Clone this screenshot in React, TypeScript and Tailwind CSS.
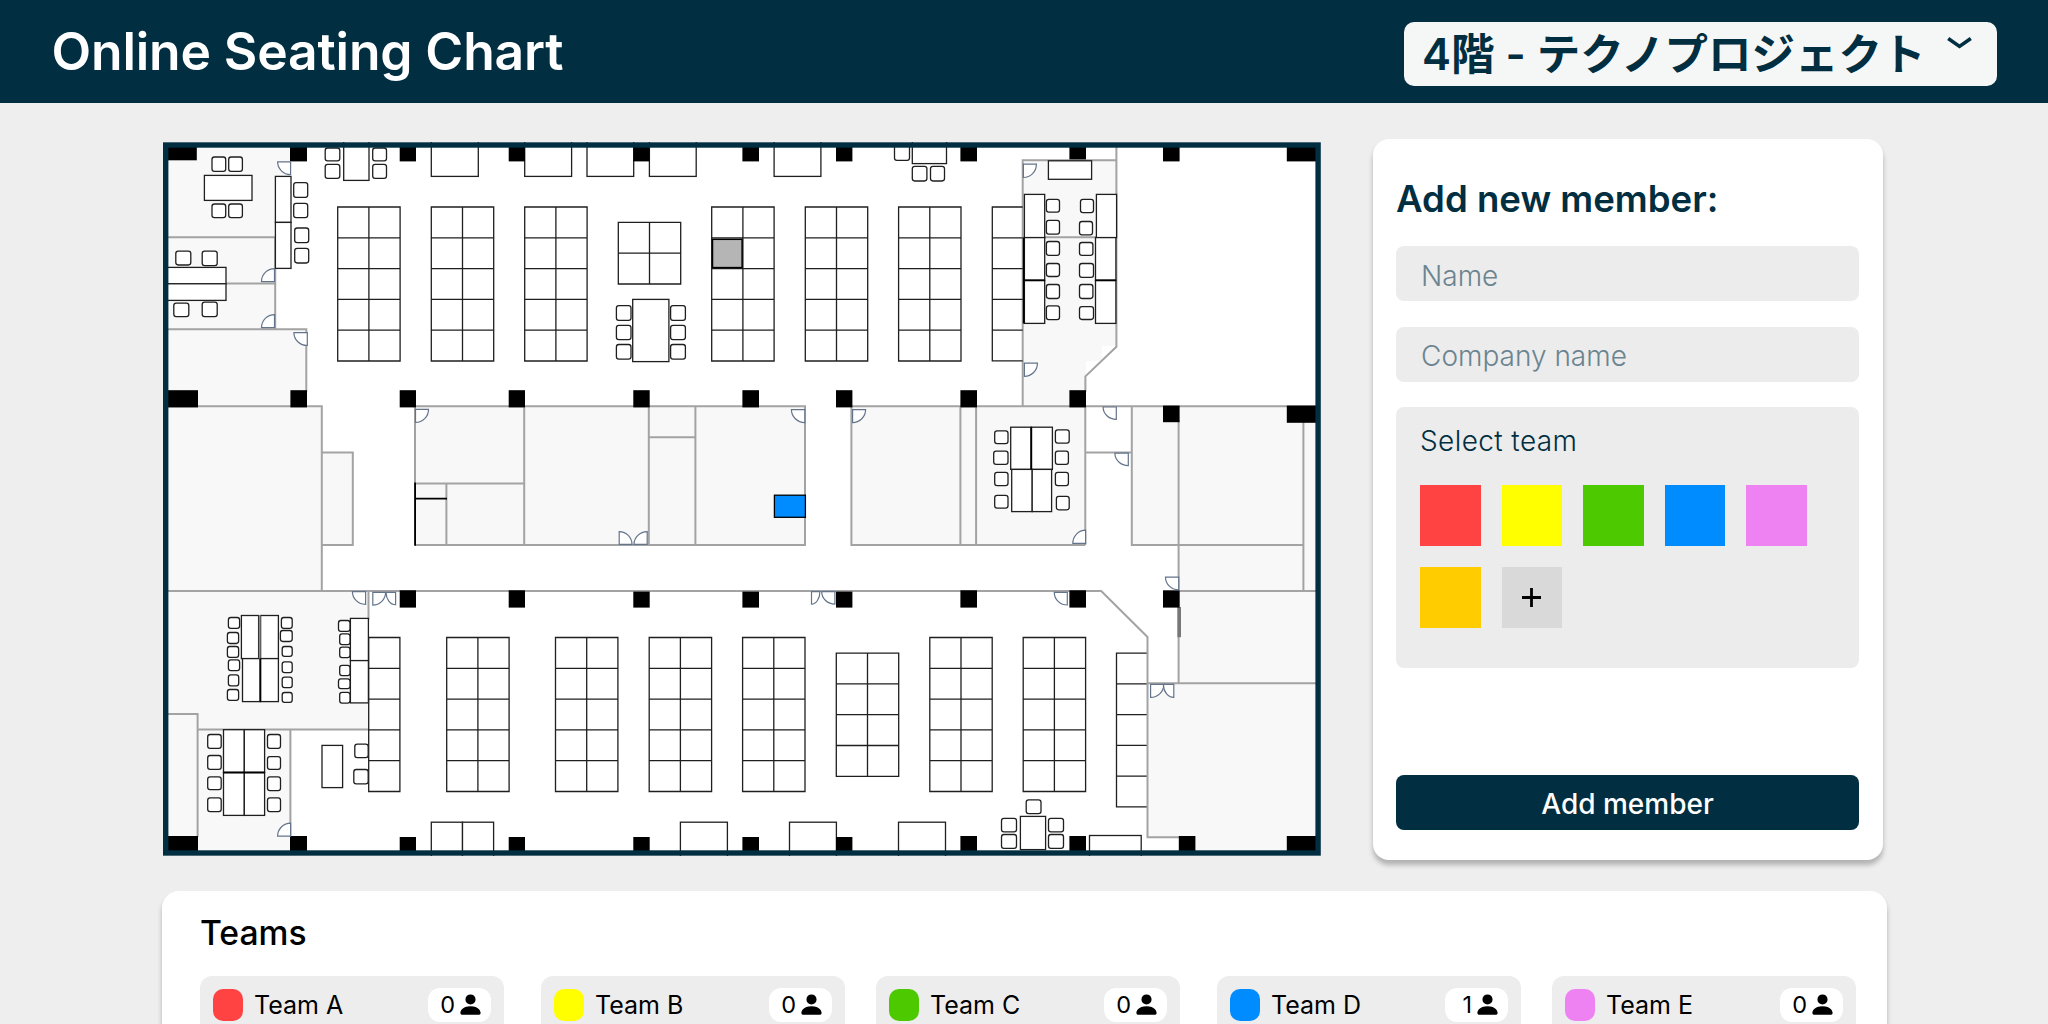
import React from "react";

type Box = [number, number, number, number];

const INK = "#1f1f1f";
const WALL = "#a3a3a3";
const NAVY = "#012e40";

/* Rooms with a light grey floor: x1, y1, x2, y2 */
const rooms: Box[] = [
  [168, 147, 290, 177],
  [168, 177, 275, 329],
  [168, 329, 306, 406],
  [168, 406, 322, 591],
  [322, 452, 353, 545],
  [168, 591, 368.5, 729],
  [168, 729, 290, 851],
  [415, 406, 805, 545],
  [851, 406, 1085, 545],
  [1131.7, 406, 1316, 545],
  [1179, 545, 1316, 683],
  [1147.3, 683, 1316, 837],
  [1179, 837, 1316, 851],
];

const walls = [
  "M168 237.2H275.2M275.2 237V329.3M226 283.4H275.2M168 329.3H306.3V392",
  "M168 406.3H321.8V591M321.8 452.4H352.8V545H321.8",
  "M415 545V406.3H805V545H415M524.2 406.3V545M648.8 406.3V545M695.4 406.3V545M648.8 437.2H695.4M415 483.4H524.2M446.4 483.4V545",
  "M1085.3 545V406.3M1085.3 545H851.4V406.3H1316M960.4 406.3V545M976.1 406.3V545",
  "M1085.3 452.4H1131.8M1131.8 406.3V545H1303.4M1178.6 420V683.2M1303.4 420V591M1178 591H1316M1147.4 683.2H1316",
  "M168 591H1101.2L1147.5 637V837.2H1179",
  "M1022.7 406.3V160.3H1116.3M1116.4 147V346.7L1085.4 376.4V392M1045 237.2H1096",
  "M368.5 591V620M168 714H197.6V837M197.6 729.4H368.7M290.4 729.4V837",
];

const pillars: Box[] = [
  [168, 147, 196.8, 160.3],
  [290, 147, 307, 161.4],
  [399.7, 147, 416, 161.4],
  [508.7, 147, 525, 161.4],
  [633.3, 147, 649.7, 161.4],
  [742.4, 147, 759, 161.4],
  [836, 147, 852.4, 161.4],
  [960.4, 147, 977, 161.4],
  [1069.4, 147, 1086, 159.4],
  [1163, 147, 1179.6, 161.4],
  [1286.8, 147, 1316, 161.4],
  [168, 390.2, 198, 407.4],
  [290.4, 390.2, 307, 407.4],
  [399.7, 390.2, 416, 407.4],
  [508.7, 390.2, 525, 407.4],
  [633.3, 390.2, 649.7, 407.4],
  [742.4, 390.2, 759, 407.4],
  [836, 390.2, 852.4, 407.4],
  [960.4, 390.2, 977, 407.4],
  [1069.4, 390.2, 1086, 407.4],
  [1163, 405.6, 1179.6, 422.2],
  [1286.8, 405.6, 1316, 422.8],
  [399.7, 590.3, 416, 607.6],
  [508.7, 590.3, 525, 607.6],
  [633.3, 591.6, 649.7, 607.6],
  [742.4, 591.6, 759, 607.6],
  [836, 591.6, 852.4, 607.6],
  [960.4, 590.3, 977, 607.6],
  [1069.4, 590.3, 1086, 607.6],
  [1163, 590.3, 1179.6, 607.6],
  [168, 836, 198, 851],
  [290, 836, 307, 851],
  [399.7, 837, 416, 851],
  [508.7, 837, 525, 851],
  [633.3, 837, 649.7, 851],
  [742.4, 837, 759, 851],
  [836, 837, 852.4, 851],
  [960.4, 836, 977, 851],
  [1069.4, 836, 1086, 851],
  [1178.8, 836, 1195.4, 851],
  [1286.8, 836, 1316, 851],
];

/* Desk islands: x, y, columns, rows */
const islands: Box[] = [
  [337.7, 207, 2, 5],
  [431.3, 207, 2, 5],
  [524.7, 207, 2, 5],
  [618.3, 222.4, 2, 2],
  [711.7, 207, 2, 5],
  [805.3, 207, 2, 5],
  [898.6, 207, 2, 5],
  [368.7, 637.5, 1, 5],
  [446.7, 637.5, 2, 5],
  [555.5, 637.5, 2, 5],
  [649.2, 637.5, 2, 5],
  [742.6, 637.5, 2, 5],
  [836.3, 653.1, 2, 4],
  [929.8, 637.5, 2, 5],
  [1023.2, 637.5, 2, 5],
];

/* Single tables: x1, y1, x2, y2 */
const tables: Box[] = [
  [204.4, 175.4, 252, 200.4],
  [275.4, 176.4, 291, 222.4],
  [275.4, 222.4, 291, 268.4],
  [343.7, 140, 369, 180.4],
  [160, 267.4, 226, 283.8],
  [160, 283.8, 226, 300.4],
  [431.3, 140, 478.3, 176.4],
  [524.7, 140, 571.6, 176.4],
  [587, 140, 633.7, 176.4],
  [649.4, 140, 696.2, 176.4],
  [774.1, 140, 820.9, 176.4],
  [912.3, 140, 946.5, 163.6],
  [632.7, 299.4, 668.9, 361.6],
  [1048.4, 160.8, 1091.6, 179.3],
  [1024.4, 194.4, 1044.7, 237.6],
  [1024.4, 237.6, 1044.7, 280.4],
  [1024.4, 280.4, 1044.7, 323.4],
  [1096.4, 194.4, 1116.6, 237.6],
  [1095.5, 237.6, 1115.9, 280.4],
  [1095.5, 280.4, 1115.9, 323.4],
  [1010.7, 427.2, 1031.3, 469.4],
  [1031.3, 427.2, 1052.4, 469.4],
  [1011.7, 469.4, 1032.2, 511.6],
  [1032.2, 469.4, 1051.6, 511.6],
  [241.4, 615.5, 258.6, 658.6],
  [260.6, 615.5, 278.4, 658.6],
  [242.5, 658.6, 260.4, 701.6],
  [260.4, 658.6, 278.4, 701.6],
  [350.4, 618.4, 368.4, 660.6],
  [350.4, 660.6, 368.4, 702.9],
  [223.5, 729.7, 244.3, 772.4],
  [244.3, 729.7, 264.6, 772.4],
  [223.5, 772.4, 244.3, 815.4],
  [244.3, 772.4, 264.6, 815.4],
  [322, 745.4, 342.6, 787.6],
  [431.3, 822.2, 462.5, 860],
  [462.5, 822.2, 493.6, 860],
  [680.4, 822.2, 727.4, 860],
  [789.5, 822.2, 836.4, 860],
  [898.5, 822.2, 945.5, 860],
  [1020.4, 816.4, 1045.6, 849.6],
  [1089.5, 835.5, 1141.2, 860],
];

/* Chairs: x, y, width, height */
const chairs: Box[] = [
  [212, 157, 13.7, 14.4],
  [228.7, 157, 13.7, 14.4],
  [212, 204, 13.7, 13.7],
  [228.7, 204, 13.7, 13.7],
  [293.7, 182.7, 14, 14.7],
  [293.7, 203.4, 14, 14.2],
  [294.7, 228, 14, 14.7],
  [294.7, 248.4, 14, 14.6],
  [325.2, 148, 14.6, 12.8],
  [325.2, 164.4, 14.6, 13.9],
  [372.7, 148, 13.8, 12.8],
  [372.7, 164.4, 13.8, 13.9],
  [175.8, 251.2, 15, 13.8],
  [202.2, 251.2, 15, 14.4],
  [173.8, 303.2, 15, 13.4],
  [202.2, 302.2, 15, 14.4],
  [894.5, 145, 15, 15.4],
  [912.3, 166.4, 14.6, 14.6],
  [930.5, 166.4, 14, 14.6],
  [616.4, 305.7, 14.6, 14.6],
  [616.4, 325.4, 14.6, 14.2],
  [616.4, 344.5, 14.6, 14.6],
  [670.6, 305.7, 14.8, 14.6],
  [670.6, 325.4, 14.8, 14.2],
  [670.6, 344.5, 14.8, 14.6],
  [1046.4, 199.4, 13.1, 12.8],
  [1046.4, 220.4, 13.1, 13.8],
  [1046.4, 241.5, 13.1, 13.8],
  [1046.4, 263.5, 13.1, 13],
  [1046.4, 284.5, 13.1, 14],
  [1046.4, 305.8, 13.1, 13.8],
  [1080.5, 199.4, 13, 13.2],
  [1079.5, 221.5, 13, 13.4],
  [1079.5, 242.5, 13.4, 12.8],
  [1079.5, 263.5, 14, 13.8],
  [1079.5, 284.5, 13.4, 14],
  [1079.5, 306.7, 14, 12.8],
  [994.7, 430.8, 13.3, 12.8],
  [993.7, 451.1, 14.3, 13.3],
  [994.7, 472.4, 13.3, 13.3],
  [994.7, 495.4, 13.3, 12.8],
  [1055.4, 429.8, 13.8, 13.4],
  [1055.4, 451.1, 13, 13.3],
  [1055.4, 472.4, 13, 13.3],
  [1056.4, 496.4, 12.8, 13.4],
  [228.4, 617.5, 11.2, 10.8],
  [227.4, 632.5, 11.2, 11],
  [227.4, 646.5, 11.2, 10.8],
  [228.4, 659.8, 11.2, 10.8],
  [228.4, 674.8, 10.3, 11],
  [227.4, 689.5, 11.2, 10.8],
  [281.4, 617.5, 10.8, 10.8],
  [280.4, 630.5, 11.8, 11],
  [282.2, 646.5, 10, 9.8],
  [282.2, 661.8, 10, 10.8],
  [282.2, 677.2, 10, 10.4],
  [282.2, 692.5, 10, 9.8],
  [338.5, 620.5, 11.5, 10.8],
  [339.7, 633.8, 10.3, 10.8],
  [339.7, 647.2, 10.3, 10.4],
  [339.7, 665.4, 10.3, 10.2],
  [338.5, 678.8, 11.5, 9.8],
  [339.7, 692.4, 10.3, 10.8],
  [207.7, 734.5, 13.5, 13.8],
  [207.7, 755.5, 13.5, 13.8],
  [207.7, 776.8, 13.5, 12.8],
  [207.7, 797.8, 13.5, 13.8],
  [267.5, 734.5, 13, 13.8],
  [267.5, 756.7, 13, 12.6],
  [267.5, 776.8, 13, 13.8],
  [267.5, 797.8, 13, 13.8],
  [354.8, 744.2, 13.4, 13.4],
  [353.8, 769.5, 14.4, 14.4],
  [1026.2, 799.8, 14.8, 13.8],
  [1001.5, 818.4, 15, 13.4],
  [1001.5, 834.5, 15, 13.8],
  [1048.5, 818.4, 15, 13.4],
  [1048.5, 834.5, 15, 13.8],
];

/* Door leaves: hinge x, hinge y, signed width, signed height */
const doors: Box[] = [
  [290.6, 161.8, -13, 12.8],
  [274.5, 281.6, -13, -13],
  [274.5, 327.6, -13, -13],
  [307.3, 332.7, -13.4, 12.8],
  [415.5, 409.4, 13, 13],
  [804.8, 409.6, -13.4, 13],
  [852.6, 409.6, 13, 13],
  [1023.4, 164.2, 13, 13.3],
  [1024.4, 363.2, 13, 13.2],
  [1116.3, 407, -13.2, 12.4],
  [1128.3, 453.2, -13.4, 12.4],
  [1085.6, 543.4, -12.8, -13.2],
  [1178.7, 577.2, -13.2, 12.6],
  [1067.3, 592.4, -13, 12.6],
  [619.2, 544.4, 12.8, -12.8],
  [647.2, 544.4, -13.2, -12.8],
  [365.6, 591.7, -13.2, 12.6],
  [372.8, 592.3, 12.8, 12.8],
  [395.6, 592.3, -9.6, 12.4],
  [811.5, 591.7, 8.4, 12.4],
  [834.9, 591.7, -13.2, 12.4],
  [1150.6, 684.4, 13.2, 13],
  [1173.8, 684.4, -10.4, 13],
  [290.6, 836.2, -13, -13],
];

const DESK_W = 31.2;
const DESK_H = 30.8;

function Island({ x, y, cols, rows }: { x: number; y: number; cols: number; rows: number }) {
  let d = "";
  for (let c = 0; c <= cols; c++) d += `M${x + c * DESK_W} ${y}v${rows * DESK_H}`;
  for (let r = 0; r <= rows; r++) d += `M${x} ${y + r * DESK_H}h${cols * DESK_W}`;
  return <path d={d} fill="none" />;
}

function FloorMap() {
  return (
    <svg className="block h-[714px] w-[1158px]" viewBox="163 142 1158 714">
      <rect x={163} y={142.3} width={1157.8} height={713.4} fill="#fff" />
      {rooms.map(([x1, y1, x2, y2], i) => (
        <rect key={i} x={x1} y={y1} width={x2 - x1} height={y2 - y1} fill="#f8f8f8" />
      ))}
      <path d="M1023 160H1116V346H1102V361H1086V406H1023Z" fill="#f8f8f8" />
      <path d={walls.join("")} fill="none" stroke={WALL} strokeWidth={2} />
      <g stroke={INK} strokeWidth={1.3} strokeLinecap="square">
        {islands.map(([x, y, cols, rows], i) => (
          <Island key={i} x={x} y={y} cols={cols} rows={rows} />
        ))}
        <path
          d="M1022 207H992.3V360.8H1022M992.3 237.8H1022M992.3 268.6H1022M992.3 299.4H1022M992.3 330.2H1022"
          fill="none"
        />
        <path
          d="M1146 653.1H1116.5V806.8H1146M1116.5 683.9H1146M1116.5 714.6H1146M1116.5 745.4H1146M1116.5 776.1H1146"
          fill="none"
        />
        {tables.map(([x1, y1, x2, y2], i) => (
          <rect key={i} x={x1} y={y1} width={x2 - x1} height={y2 - y1} fill="#fff" />
        ))}
        {chairs.map(([x, y, w, h], i) => (
          <rect key={i} x={x} y={y} width={w} height={h} rx={2.4} fill="#fff" />
        ))}
      </g>
      <rect x={258.8} y={615} width={1.8} height={43.6} fill="#8a8a8a" />
      <g fill="none" stroke="#000" strokeWidth={1.8}>
        <path d="M1023.7 237.6V323.6M1023.7 280.4H1044.7M1095.5 280.4H1116M1031.3 427V469.5M260.4 658.6V701.6M223.5 772.6H264.6M415.1 482.6V545.8M415 498.7H447" />
      </g>
      <path d="M1179.2 607V637.2" stroke="#777" strokeWidth={3.6} />
      {pillars.map(([x1, y1, x2, y2], i) => (
        <rect key={i} x={x1} y={y1} width={x2 - x1} height={y2 - y1} fill="#000" />
      ))}
      <g fill="#fff" stroke="#64748b" strokeWidth={1.2}>
        {doors.map(([x, y, w, h], i) => (
          <path
            key={i}
            d={`M${x} ${y}h${w}A${Math.abs(w)} ${Math.abs(h)} 0 0 ${w * h > 0 ? 1 : 0} ${x} ${y + h}Z`}
          />
        ))}
      </g>
      <rect x={712.5} y={239.3} width={29.6} height={28.3} fill="#b5b5b5" stroke="#000" strokeWidth={1.5} />
      <rect x={774.4} y={495.2} width={31} height={22.1} fill="#008cff" stroke="#000" strokeWidth={1.3} />
      <rect x={165.7} y={145} width={1152.4} height={708} fill="none" stroke={NAVY} strokeWidth={5.4} />
    </svg>
  );
}

function PersonIcon() {
  return (
    <svg className="size-[27px]" viewBox="0 0 16 16" fill="#000">
      <path d="M3 14s-1 0-1-1 1-4 6-4 6 3 6 4-1 1-1 1zm5-6a3 3 0 1 0 0-6 3 3 0 0 0 0 6" />
    </svg>
  );
}

const swatches = ["bg-[#ff4343]", "bg-[#ffff00]", "bg-[#4dc900]", "bg-[#008cff]", "bg-[#ee82f2]", "bg-[#ffcc00]"];

const teams = [
  { name: "Team A", count: 0, color: "bg-[#ff4343]", gap: "" },
  { name: "Team B", count: 0, color: "bg-[#ffff00]", gap: "ml-[37px]" },
  { name: "Team C", count: 0, color: "bg-[#4dc900]", gap: "ml-[31px]" },
  { name: "Team D", count: 1, color: "bg-[#008cff]", gap: "ml-[37px]" },
  { name: "Team E", count: 0, color: "bg-[#ee82f2]", gap: "ml-[31px]" },
];

function Header() {
  return (
    <header className="flex h-[103.4px] items-center justify-between bg-[#012e40] pr-[51px] pl-[51.5px]">
      <h1 className="text-[51.6px] font-semibold tracking-[-0.15px] whitespace-nowrap text-white">
        Online Seating Chart
      </h1>
      <button className="mt-1 flex h-16 w-[593px] items-start rounded-[10px] bg-[#f5f7f6] pl-[18px] text-[#012e40]">
        <span className="font-['Inter','Noto_Sans_CJK_JP',sans-serif] text-[43.5px] leading-[64px] font-semibold whitespace-nowrap">
          4階 - テクノプロジェクト
        </span>
        <svg className="mt-[15px] ml-auto mr-[25px] h-3 w-[25px]" viewBox="0 0 25 12" fill="none">
          <path d="M1.2 1.6L12.5 9.4L23.8 1.6" stroke="#012e40" strokeWidth="3.6" />
        </svg>
      </button>
    </header>
  );
}

function MemberForm() {
  return (
    <section className="flex h-[721px] w-[510px] flex-col rounded-2xl bg-white pr-6 pl-[23px] shadow-[0_5px_5px_rgba(0,0,0,0.25)]">
      <h2 className="mt-[36px] text-[36.6px] leading-[48px] font-semibold whitespace-nowrap text-[#012e40]">
        Add new member:
      </h2>
      <div className="mt-[23.3px] h-[55px] rounded-lg bg-[#ececec] pt-[4px] pl-[25px] text-[28px] leading-[53px] font-light text-[#6b8490]">
        Name
      </div>
      <div className="mt-[25.3px] h-[55px] rounded-lg bg-[#ececec] pt-[3px] pl-[25px] text-[28px] leading-[53px] font-light text-[#6b8490]">
        Company name
      </div>
      <div className="mt-[25.3px] h-[261px] rounded-lg bg-[#ececec] px-6 pt-[14px]">
        <div className="text-[28px] leading-10 font-light tracking-[0.4px] text-[#012e40]">Select team</div>
        <div className="mt-[24.6px] flex flex-wrap gap-[21px]">
          {swatches.map((c) => (
            <div key={c} className={`size-[60.6px] ${c}`} />
          ))}
          <div className="flex size-[60.6px] items-center justify-center bg-[#d9d9d9]">
            <svg className="size-[19px]" viewBox="0 0 19 19">
              <path d="M9.5 0V19M0 9.5H19" stroke="#000" strokeWidth="2.8" />
            </svg>
          </div>
        </div>
      </div>
      <button className="mt-[107px] h-[55px] rounded-lg bg-[#012e40] pt-1 text-[28px] leading-[51px] font-medium text-white">
        Add member
      </button>
    </section>
  );
}

export default function App() {
  return (
    <div className="h-screen overflow-hidden bg-[#eeeeee] font-['Inter',sans-serif]">
      <Header />
      <main className="pl-[162px]">
        <div className="flex pt-[35.6px]">
          <div className="mt-[3px] ml-px">
            <FloorMap />
          </div>
          <div className="ml-[52px]">
            <MemberForm />
          </div>
        </div>
        <section className="mt-[31px] h-[260px] w-[1725px] rounded-[17px] bg-white pl-[38px] shadow-[0_5px_5px_rgba(0,0,0,0.25)]">
          <h2 className="pt-[22px] text-[33.7px] leading-10 font-medium text-black">Teams</h2>
          <div className="mt-[23px] flex">
            {teams.map((t) => (
              <div
                key={t.name}
                className={`flex h-[120px] w-[304px] shrink-0 items-start rounded-xl bg-[#ededed] pr-[13px] pl-[13px] ${t.gap}`}
              >
                <div className={`mt-[13px] h-8 w-[30px] rounded-[10px] ${t.color}`} />
                <div className="mt-3 ml-[11px] text-[25px] leading-[34px] whitespace-nowrap text-black">{t.name}</div>
                <div className="mt-3 ml-auto flex h-[34px] w-[63px] items-center justify-end rounded-xl bg-white pr-[7px] text-[23.5px] text-black">
                  {t.count}
                  <span className="ml-[2px]">
                    <PersonIcon />
                  </span>
                </div>
              </div>
            ))}
          </div>
        </section>
      </main>
    </div>
  );
}
